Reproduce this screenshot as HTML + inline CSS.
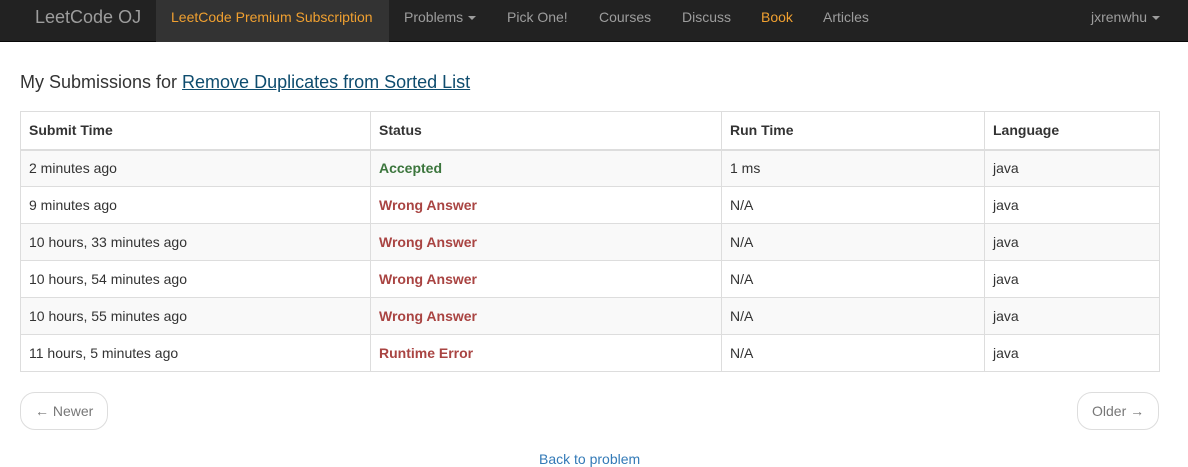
<!DOCTYPE html>
<html><head><meta charset="utf-8"><style>
*{margin:0;padding:0;box-sizing:border-box}
body{width:1188px;height:465px;overflow:hidden;background:#fff;font-family:"Liberation Sans",Arial,sans-serif;font-size:14px;color:#333;position:relative}
.nav{position:absolute;left:0;top:0;width:1188px;height:42px;background:#222;border-bottom:1px solid #080808}
.nav span{position:absolute;top:0;line-height:34px;font-size:14px;color:#9d9d9d;white-space:nowrap}
.caret{display:inline-block;width:0;height:0;border-left:4px solid transparent;border-right:4px solid transparent;border-top:4px solid #9d9d9d;vertical-align:middle;margin-left:5px}
.active{position:absolute;left:156px;top:0;width:233px;height:42px;background:#333}
h4{position:absolute;left:20px;top:72px;font-size:18px;font-weight:normal;color:#333}
h4 a{color:#0e4c6e;text-decoration:underline}
table{position:absolute;left:20px;top:111px;width:1140px;border-collapse:collapse}
td,th{border:1px solid #ddd;height:37px;padding:0 8px;text-align:left;font-size:14px}
th{height:38px;border-bottom:2px solid #ddd;font-weight:bold}
tr.s td{background:#f9f9f9}
.ac{color:#3c763d;font-weight:bold}.wa{color:#a94442;font-weight:bold}
.btn{position:absolute;top:392px;height:38px;border:1px solid #ddd;border-radius:15px;line-height:36px;padding:0 14px;color:#777;font-size:14px;background:#fff}
.back{position:absolute;left:539px;top:451px;color:#337ab7;font-size:14px}
</style></head><body>
<div class="nav">
<div class="active"></div>
<span style="left:35px;font-size:18px;line-height:34px">LeetCode OJ</span>
<span style="left:171px;color:#f0a030">LeetCode Premium Subscription</span>
<span style="left:404px">Problems<i class="caret"></i></span>
<span style="left:507px">Pick One!</span>
<span style="left:599px">Courses</span>
<span style="left:682px">Discuss</span>
<span style="left:761px;color:#f0a030">Book</span>
<span style="left:823px">Articles</span>
<span style="left:1091px">jxrenwhu<i class="caret"></i></span>
</div>
<h4>My Submissions for <a>Remove Duplicates from Sorted List</a></h4>
<table>
<tr><th style="width:350px">Submit Time</th><th style="width:351px">Status</th><th style="width:263px">Run Time</th><th>Language</th></tr>
<tr class="s"><td>2 minutes ago</td><td class="ac">Accepted</td><td>1 ms</td><td>java</td></tr>
<tr><td>9 minutes ago</td><td class="wa">Wrong Answer</td><td>N/A</td><td>java</td></tr>
<tr class="s"><td>10 hours, 33 minutes ago</td><td class="wa">Wrong Answer</td><td>N/A</td><td>java</td></tr>
<tr><td>10 hours, 54 minutes ago</td><td class="wa">Wrong Answer</td><td>N/A</td><td>java</td></tr>
<tr class="s"><td>10 hours, 55 minutes ago</td><td class="wa">Wrong Answer</td><td>N/A</td><td>java</td></tr>
<tr><td>11 hours, 5 minutes ago</td><td class="wa">Runtime Error</td><td>N/A</td><td>java</td></tr>
</table>
<div class="btn" style="left:20px">&larr; Newer</div>
<div class="btn" style="left:1077px">Older &rarr;</div>
<div class="back">Back to problem</div>
</body></html>
